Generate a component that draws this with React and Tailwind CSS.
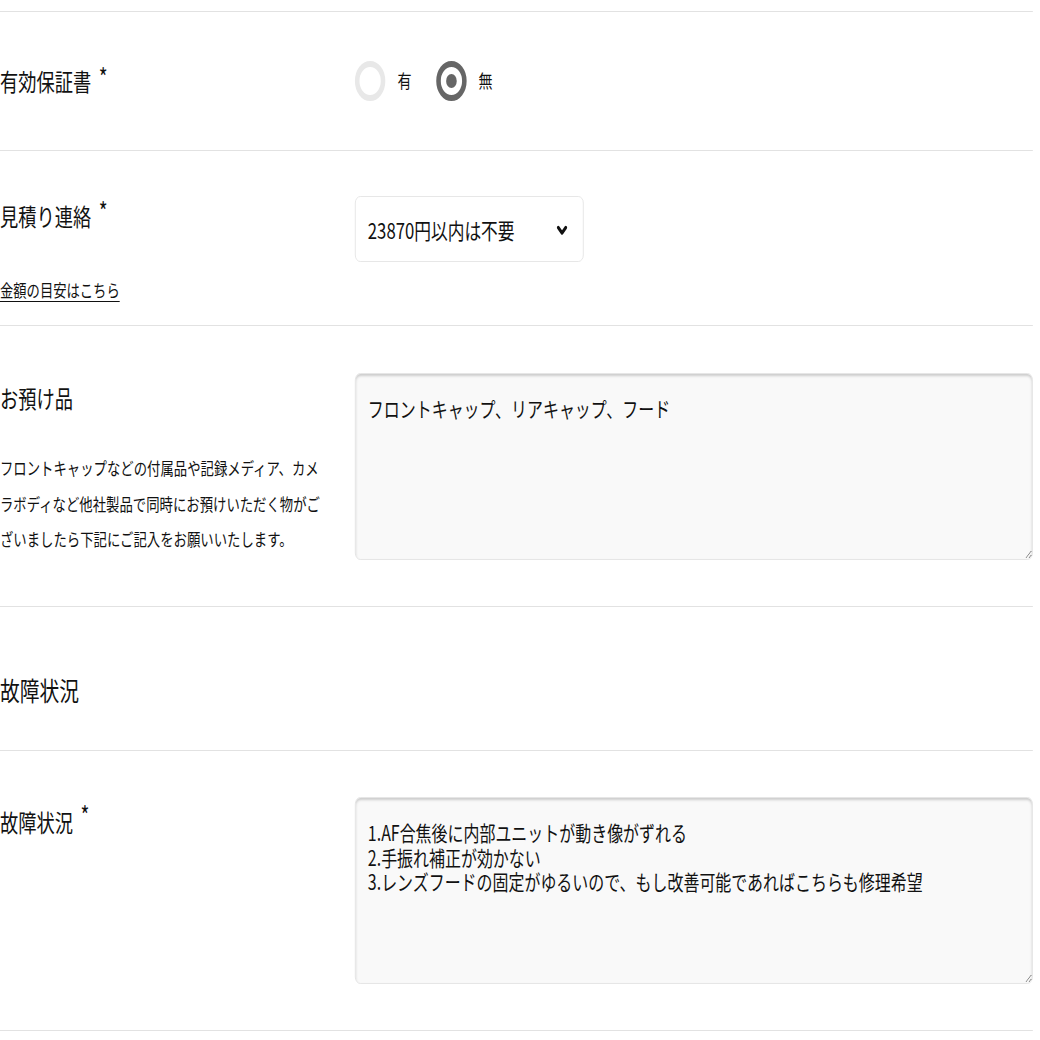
import React from 'react';

const font = { fontFamily: '"Noto Sans CJK JP", "Noto Sans", sans-serif' };

function Required({ top = 'mt-[9px]' }) {
  return <span className={`ml-[10px] text-[25px] leading-none ${top}`}>*</span>;
}

function Radio({ checked, label }) {
  return (
    <label className="flex items-center">
      {checked ? (
        <span className="w-[40px] h-[40px] rounded-full border-[6px] border-[#666666] bg-white flex items-center justify-center">
          <span className="w-[14px] h-[14px] rounded-full bg-[#666666]" />
        </span>
      ) : (
        <span className="w-[40px] h-[40px] rounded-full border-[6px] border-[#e8e8e8] bg-white" />
      )}
      <span className="ml-[16px] text-[18.5px]">{label}</span>
    </label>
  );
}

export default function App() {
  return (
    <div className="w-[1040px] h-[1040px] overflow-hidden bg-white text-[#111111]" style={font}>
      <div className="w-[1368px] pr-[9px] pt-[11px] origin-top-left scale-x-[0.76]">
        <div className="border-t border-[#e2e2e2]">
          {/* 有効保証書 */}
          <div className="flex pt-[45px] pb-[45px] border-b border-[#e2e2e2]">
            <div className="w-[467px] flex text-[24px] leading-[48px]">
              <span>有効保証書</span>
              <Required top="mt-[7px]" />
            </div>
            <div className="flex items-center gap-[32px]">
              <Radio label="有" />
              <Radio checked label="無" />
            </div>
          </div>

          {/* 見積り連絡 */}
          <div className="flex pt-[45px] pb-[23px] border-b border-[#e2e2e2]">
            <div className="w-[467px]">
              <div className="flex text-[24px] leading-[40px]">
                <span>見積り連絡</span>
                <Required top="mt-[2px]" />
              </div>
              <a href="#" className="block mt-[42px] text-[17.5px] leading-[24px] underline underline-offset-[4px]">金額の目安はこちら</a>
            </div>
            <div className="w-[301px] h-[66px] border border-[#e4e4e4] rounded-[7px] flex items-center justify-between pl-[16px] pr-[20px]">
              <span className="text-[22px]">23870円以内は不要</span>
              <svg width="15" height="11" viewBox="0 0 15 11" className="mt-[3px]">
                <polyline points="2.5,2.5 7.5,8 12.5,2.5" fill="none" stroke="#111111" strokeWidth="3.5" strokeLinecap="round" strokeLinejoin="round" />
              </svg>
            </div>
          </div>

          {/* お預け品 */}
          <div className="flex pt-[47px] pb-[46px] border-b border-[#e2e2e2]">
            <div className="w-[467px]">
              <div className="text-[24px] leading-[50px]">お預け品</div>
              <p className="mt-[27px] text-[17.6px] leading-[35.5px]">
                フロントキャップなどの付属品や記録メディア、カメ<br />
                ラボディなど他社製品で同時にお預けいただく物がご<br />
                ざいましたら下記にご記入をお願いいたします。
              </p>
            </div>
            <textarea
              defaultValue="フロントキャップ、リアキャップ、フード"
              className="flex-1 h-[187px] bg-[#f9f9f9] border border-[#e2e2e2] rounded-[7px] shadow-[inset_0_2px_3px_rgba(0,0,0,0.18)] pt-[22px] px-[16px] text-[21px] leading-[24.5px] text-[#111111] outline-none"
              style={font}
            />
          </div>

          {/* 故障状況 heading */}
          <div className="pt-[63px] pb-[40px] border-b border-[#e2e2e2]">
            <h2 className="text-[26px] leading-[40px] font-normal">故障状況</h2>
          </div>

          {/* 故障状況 */}
          <div className="flex pt-[46px] pb-[46px] border-b border-[#e2e2e2]">
            <div className="w-[467px] flex text-[24px] leading-[50px]">
              <span>故障状況</span>
              <Required top="mt-[5px]" />
            </div>
            <textarea
              defaultValue={'1.AF合焦後に内部ユニットが動き像がずれる\n2.手振れ補正が効かない\n3.レンズフードの固定がゆるいので、もし改善可能であればこちらも修理希望'}
              className="flex-1 h-[187px] bg-[#f9f9f9] border border-[#e2e2e2] rounded-[7px] shadow-[inset_0_2px_3px_rgba(0,0,0,0.18)] pt-[22px] px-[16px] text-[21px] leading-[24.5px] text-[#111111] outline-none"
              style={font}
            />
          </div>
        </div>
      </div>
    </div>
  );
}
